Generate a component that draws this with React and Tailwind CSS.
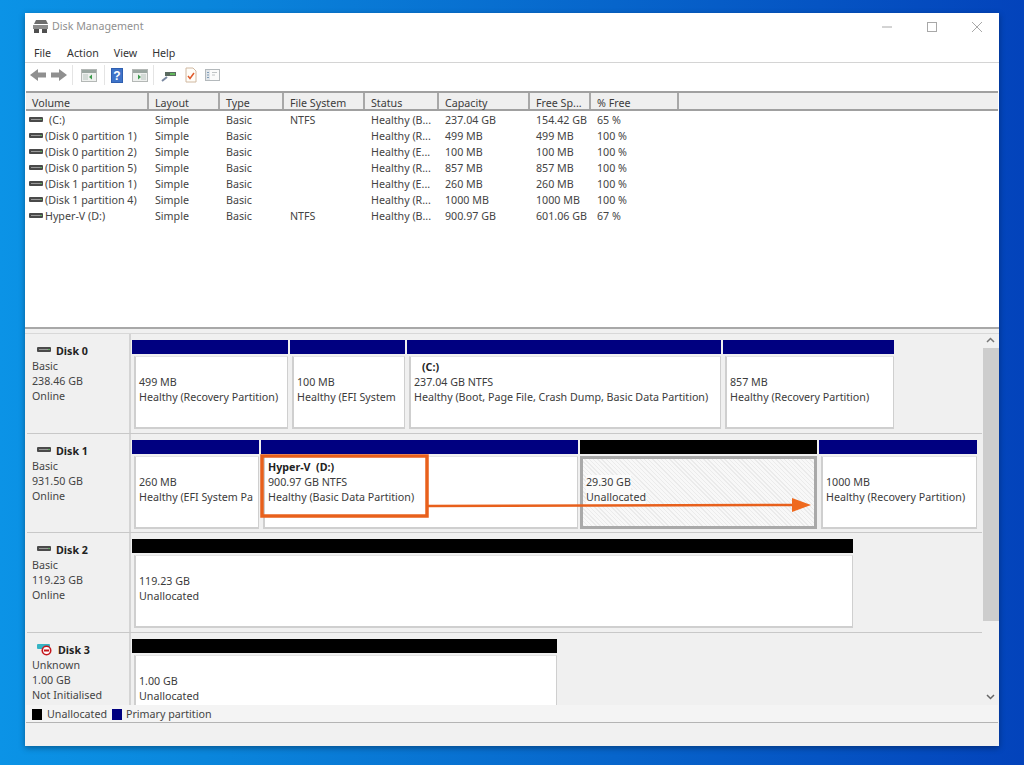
const cols = [
  { label: "Volume", w: "w-[123px]" },
  { label: "Layout", w: "w-[71px]" },
  { label: "Type", w: "w-[64px]" },
  { label: "File System", w: "w-[81px]" },
  { label: "Status", w: "w-[74px]" },
  { label: "Capacity", w: "w-[91px]" },
  { label: "Free Sp...", w: "w-[61px]" },
  { label: "% Free", w: "w-[88px]" },
];

const volumes = [
  ["(C:)", "Simple", "Basic", "NTFS", "Healthy (B...", "237.04 GB", "154.42 GB", "65 %"],
  ["(Disk 0 partition 1)", "Simple", "Basic", "", "Healthy (R...", "499 MB", "499 MB", "100 %"],
  ["(Disk 0 partition 2)", "Simple", "Basic", "", "Healthy (E...", "100 MB", "100 MB", "100 %"],
  ["(Disk 0 partition 5)", "Simple", "Basic", "", "Healthy (R...", "857 MB", "857 MB", "100 %"],
  ["(Disk 1 partition 1)", "Simple", "Basic", "", "Healthy (E...", "260 MB", "260 MB", "100 %"],
  ["(Disk 1 partition 4)", "Simple", "Basic", "", "Healthy (R...", "1000 MB", "1000 MB", "100 %"],
  ["Hyper-V (D:)", "Simple", "Basic", "NTFS", "Healthy (B...", "900.97 GB", "601.06 GB", "67 %"],
];

const disks = [
  {
    name: "Disk 0",
    info: ["Basic", "238.46 GB", "Online"],
    parts: [
      { w: "w-[158px]", lines: ["499 MB", "Healthy (Recovery Partition)"] },
      { w: "w-[117px]", lines: ["100 MB", "Healthy (EFI System"] },
      { w: "w-[316px]", title: "(C:)", lines: ["237.04 GB NTFS", "Healthy (Boot, Page File, Crash Dump, Basic Data Partition)"] },
      { w: "w-[173px]", lines: ["857 MB", "Healthy (Recovery Partition)"] },
    ],
  },
  {
    name: "Disk 1",
    info: ["Basic", "931.50 GB", "Online"],
    parts: [
      { w: "w-[129px]", lines: ["260 MB", "Healthy (EFI System Pa"] },
      { w: "w-[319px]", title: "Hyper-V\u00a0\u00a0(D:)", lines: ["900.97 GB NTFS", "Healthy (Basic Data Partition)"] },
      { w: "w-[239px]", free: true, selected: true, lines: ["29.30 GB", "Unallocated"] },
      { w: "w-[160px]", lines: ["1000 MB", "Healthy (Recovery Partition)"] },
    ],
  },
  {
    name: "Disk 2",
    info: ["Basic", "119.23 GB", "Online"],
    parts: [{ w: "w-[723px]", free: true, lines: ["119.23 GB", "Unallocated"] }],
  },
  {
    name: "Disk 3",
    error: true,
    info: ["Unknown", "1.00 GB", "Not Initialised"],
    parts: [{ w: "w-[427px]", free: true, lines: ["1.00 GB", "Unallocated"] }],
  },
];

function DriveIcon({ className }) {
  return (
    <svg width="14" height="8" viewBox="0 0 14 8" className={className}>
      <rect x="0" y="1" width="14" height="5" rx="1" fill="#4a4a4a" />
      <rect x="2" y="3" width="9" height="1" fill="#9a9a9a" />
      <rect x="11" y="3" width="2" height="1" fill="#5fae5f" />
    </svg>
  );
}

function ErrorDiskIcon() {
  return (
    <svg width="16" height="14" viewBox="0 0 16 14" className="shrink-0">
      <rect x="0" y="1" width="13" height="5" rx="1" fill="#35b4c4" />
      <circle cx="9.5" cy="7.5" r="5" fill="#c4161c" />
      <circle cx="9.5" cy="7.5" r="3.4" fill="#fff" />
      <rect x="7" y="6.5" width="5" height="2" fill="#c4161c" />
    </svg>
  );
}

function ArrowIcon({ flip }) {
  return (
    <svg width="16" height="12" viewBox="0 0 16 12" className={flip ? "-scale-x-100" : ""}>
      <path d="M0 3.5h8V0l8 6-8 6V8.5H0z" fill="#8f8f8f" />
    </svg>
  );
}

function PaneIcon({ accent, left }) {
  return (
    <svg width="16" height="13" viewBox="0 0 16 13">
      <rect x="0.5" y="0.5" width="15" height="12" fill="#eef0ee" stroke="#b4b8b6" />
      <rect x="1" y="1" width="14" height="3" fill="#9aa6a0" />
      <rect x={left ? 2 : 9} y="5" width="5" height="6" fill="#d3dad6" />
      <path d={left ? "M11 5.5v5l-3-2.5z" : "M6 5.5v5l3-2.5z"} fill={accent} />
    </svg>
  );
}

function Toolbar() {
  return (
    <div className="h-[28px] flex items-center pl-[5px] pb-[4px] bg-white">
      <ArrowIcon flip />
      <div className="ml-[5px]"><ArrowIcon /></div>
      <div className="w-px h-[20px] bg-[#e4e4e4] ml-[5px]" />
      <div className="ml-[8px]"><PaneIcon accent="#3c9a4c" left /></div>
      <div className="w-px h-[20px] bg-[#e4e4e4] ml-[7px]" />
      <svg width="12" height="15" viewBox="0 0 12 15" className="ml-[6px]">
        <rect width="12" height="15" fill="#2f5fb0" />
        <rect x="1" y="1" width="10" height="13" fill="#3f74c9" />
        <text x="6" y="12" textAnchor="middle" fontSize="12" fontWeight="700" fill="#fff" fontFamily="Liberation Sans, sans-serif">?</text>
      </svg>
      <div className="ml-[9px]"><PaneIcon accent="#3c9a4c" /></div>
      <div className="w-px h-[20px] bg-[#e4e4e4] ml-[5px]" />
      <svg width="15" height="13" viewBox="0 0 15 13" className="ml-[7px]">
        <path d="M1 12l5-4" stroke="#7a88a0" strokeWidth="2" />
        <rect x="4" y="3" width="11" height="4" fill="#5a6a60" />
        <rect x="9" y="4" width="5" height="2" fill="#63b85c" />
      </svg>
      <svg width="12" height="16" viewBox="0 0 12 16" className="ml-[9px]">
        <path d="M1 1h7l3 3v11H1z" fill="#fffdf8" stroke="#d0b8a0" />
        <path d="M3 9l2 2.5L9 6" fill="none" stroke="#e0592a" strokeWidth="1.5" />
      </svg>
      <svg width="15" height="12" viewBox="0 0 15 12" className="ml-[8px]">
        <rect x="0.5" y="0.5" width="14" height="11" fill="#fbfbfb" stroke="#b4b9bc" />
        <rect x="1" y="1" width="4" height="10" fill="#e2e6ea" />
        <path d="M2 3.5h2M2 6h2M2 8.5h2" stroke="#7f9db8" />
        <path d="M7 3.5h5M7 6h3" stroke="#c0c4c6" />
      </svg>
    </div>
  );
}

function VolumeList() {
  return (
    <div className="h-[236px] bg-white border-t-[2px] border-[#a0a0a0] flex flex-col">
      <div className="h-[16px] box-content flex bg-[#efefef] border-b-[2px] border-[#a0a0a0] shrink-0">
        {cols.map((c) => (
          <div key={c.label} className={`${c.w} shrink-0 pl-[6px] border-r-[2px] border-[#a8a8a8] leading-[20px] text-[#3c3c3c]`}>
            {c.label}
          </div>
        ))}
      </div>
      <div className="pt-px">
        {volumes.map((row) => (
          <div key={row[0]} className="h-[16px] flex leading-[16px] text-[#444]">
            {row.map((cell, i) => (
              <div key={i} className={`${cols[i].w} shrink-0 pl-[6px] whitespace-nowrap flex items-center`}>
                {i === 0 && <DriveIcon className="-ml-[3px] mr-[2px] shrink-0" />}
                {i === 0 && cell === "(C:)" && <span className="w-[4px]" />}
                {cell}
              </div>
            ))}
          </div>
        ))}
      </div>
    </div>
  );
}

function Partition({ part }) {
  return (
    <div className={`${part.w} shrink-0 flex flex-col pr-[2px]`}>
      <div className={`h-[14px] shrink-0 ${part.free ? "bg-black" : "bg-[#000080]"}`} />
      <div
        className={`mt-[2px] h-[73px] flex flex-col leading-[15px] text-[#3c3c3c] whitespace-nowrap overflow-hidden ${
          part.selected
            ? "border-[3px] border-[#a9a9a9] pt-[1px] pl-[3px] bg-[repeating-linear-gradient(45deg,#ebebeb_0px,#ebebeb_1px,#f8f8f8_1px,#f8f8f8_3px)]"
            : "ml-[2px] border-l-[2px] border-t border-r border-b-[2px] border-[#cfcfcf] border-t-[#e4e4e4] pt-[3px] pl-[3px] bg-white"
        }`}
      >
        <div className={`h-[15px] font-bold text-[#222] ${part.title === "(C:)" ? "pl-[8px]" : ""}`}>{part.title}</div>
        {part.lines.map((l) => (
          <div key={l} className={part.selected ? "bg-[#fbfbfb] w-fit" : ""}>{l}</div>
        ))}
      </div>
    </div>
  );
}

function DiskRow({ disk }) {
  return (
    <div className="h-[99.5px] shrink-0 flex border-b-[1px] border-[#c8c8c8]">
      <div className="w-[104px] shrink-0 pl-[5px] pt-[10px] border-r-[2px] border-[#d4d4d4] text-[#444] leading-[15px]">
        <div className="flex items-center gap-[5px] pl-[5px] h-[15px]">
          {disk.error ? <ErrorDiskIcon /> : <DriveIcon className="-mt-[3px]" />}
          <span className="font-bold text-[#222]">{disk.name}</span>
        </div>
        {disk.info.map((t) => (
          <div key={t}>{t}</div>
        ))}
      </div>
      <div className="pl-[1px] pt-[6px] flex items-start">
        {disk.parts.map((p) => (
          <Partition key={p.lines[0]} part={p} />
        ))}
      </div>
    </div>
  );
}

function Scrollbar() {
  return (
    <div className="w-[17px] shrink-0 flex flex-col bg-[#f0f0f0] items-center">
      <svg width="9" height="6" viewBox="0 0 9 6" className="mt-[3px]">
        <path d="M1 5l3.5-3.5L8 5" fill="none" stroke="#777" strokeWidth="1.5" />
      </svg>
      <div className="w-[16px] h-[273px] mt-[5px] bg-[#cdcdcd]" />
      <div className="flex-1" />
      <svg width="9" height="6" viewBox="0 0 9 6" className="mb-[5px]">
        <path d="M1 1l3.5 3.5L8 1" fill="none" stroke="#666" strokeWidth="1.5" />
      </svg>
    </div>
  );
}

export default function App() {
  return (
    <div className="w-[1024px] h-[765px] overflow-hidden pt-[13px] pl-[25px] bg-[linear-gradient(90deg,#0b93e6_0%,#0a86dc_20%,#0765cb_60%,#0343bb_100%)] font-['Noto_Sans',sans-serif] text-[10.7px]">
      <div className="relative w-[974px] h-[733px] bg-[#f0f0f0] flex flex-col shadow-[0_2px_6px_rgba(0,0,0,0.35)]">
        {/* title bar */}
        <div className="h-[29px] shrink-0 bg-white flex items-center pl-[7px] pb-[2px] text-[#8f8f8f]">
          <svg width="17" height="15" viewBox="0 0 17 15">
            <path d="M4 1h10l2 4H2z" fill="#6d6d6d" />
            <rect x="1" y="6" width="15" height="4" fill="#8c8c8c" />
            <rect x="2" y="10" width="5" height="4" fill="#4f4f4f" />
            <rect x="10" y="10" width="5" height="4" fill="#4f4f4f" />
          </svg>
          <span className="ml-[3px]">Disk Management</span>
          <div className="flex-1" />
          <svg width="10" height="10" viewBox="0 0 10 10" className="mr-[35px]"><path d="M0 5h10" stroke="#a8a8a8" /></svg>
          <svg width="10" height="10" viewBox="0 0 10 10" className="mr-[35px]"><rect x="0.5" y="0.5" width="9" height="9" fill="none" stroke="#a8a8a8" /></svg>
          <svg width="10" height="10" viewBox="0 0 10 10" className="mr-[17px]"><path d="M0 0l10 10M10 0L0 10" stroke="#a8a8a8" /></svg>
        </div>
        {/* menu */}
        <div className="h-[21px] shrink-0 bg-white border-b border-[#d4d4d4] flex items-center pl-[9px] pt-[2px] gap-[15px] text-[#333]">
          <span className="mr-[1px]">File</span>
          <span>Action</span>
          <span>View</span>
          <span>Help</span>
        </div>
        <Toolbar />
        <div className="px-px bg-white"><VolumeList /></div>
        {/* splitter */}
        <div className="h-[6px] shrink-0 bg-[#f0f0f0] border-t-[2px] border-[#a8a8a8]" />
        {/* graphical view */}
        <div className="h-[372px] shrink-0 flex pl-[2px] overflow-hidden border-t border-[#d8d8d8]">
          <div className="flex-1 flex flex-col overflow-hidden">
            {disks.map((d) => (
              <DiskRow key={d.name} disk={d} />
            ))}
          </div>
          <Scrollbar />
        </div>
        {/* legend */}
        <div className="h-[18px] shrink-0 mx-px flex items-center pl-[6px] pt-px bg-[#f4f4f4] border-b border-[#b4b4b4] text-[#444]">
          <div className="w-[10px] h-[11px] bg-black mr-[5px]" />
          <span>Unallocated</span>
          <div className="w-[10px] h-[11px] bg-[#000080] ml-[5px] mr-[4px]" />
          <span>Primary partition</span>
        </div>
        <div className="flex-1 bg-[#f1f1f1]" />

        {/* orange annotation */}
        <svg width="560" height="80" viewBox="0 0 560 80" className="absolute left-[234px] top-[440px]">
          <rect x="3" y="3" width="165" height="60" fill="none" stroke="#e8601c" strokeWidth="3.5" />
          <path d="M168 53L538 52" stroke="#e8601c" strokeWidth="2.5" />
          <path d="M533 45l19 7-19 7z" fill="#ef6a1f" />
        </svg>
      </div>
    </div>
  );
}
